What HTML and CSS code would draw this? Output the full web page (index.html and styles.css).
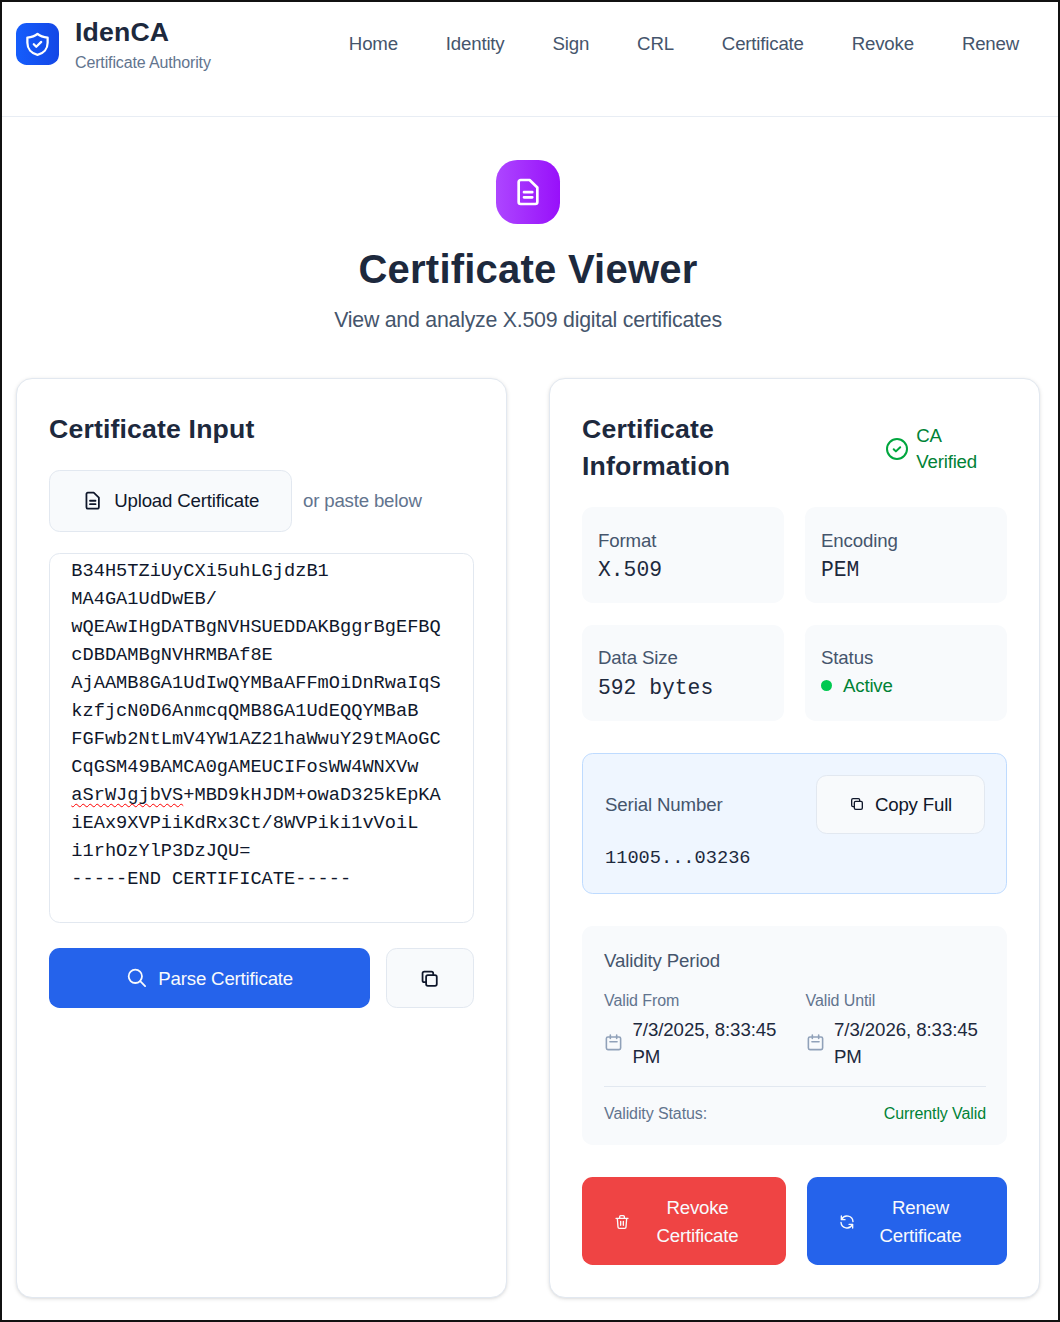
FILE: index.html
```html
<!DOCTYPE html>
<html lang="en">
<head>
<meta charset="utf-8">
<title>IdenCA - Certificate Viewer</title>
<link rel="stylesheet" href="styles.css">
</head>
<body>
<svg class="symbols" aria-hidden="true">
  <symbol id="file" viewBox="0 0 24 24"><path d="M13.2 3H6.5A1.5 1.5 0 0 0 5 4.500v15A1.500 1.500 0 0 0 6.500 21h11a1.500 1.500 0 0 0 1.500-1.500V8.600zM9 12.100h6.200M9 16h6.200"/></symbol>
  <symbol id="copy" viewBox="0 0 24 24"><rect x="8" y="8" width="12" height="12" rx="2"/><path d="M8 16H6a2 2 0 0 1-2-2V6a2 2 0 0 1 2-2h8a2 2 0 0 1 2 2v2"/></symbol>
  <symbol id="calendar" viewBox="0 0 24 24"><rect x="3" y="5" width="18" height="16" rx="2"/><path d="M8 2.500V7M16 2.500V7M7.500 11h9"/></symbol>
</svg>
<header class="topbar">
  <div class="brand">
    <span class="logo"><svg viewBox="0 0 24 24"><path d="M12 2.500C9.500 4.700 6.500 5.500 3 5.800v4.700C3 15.800 6.500 20 12 21.200c5.500-1.200 9-5.400 9-10.700V5.800c-3.500-.3-6.500-1.100-9-3.300z"/><path d="M8.700 11.800l2.200 2.200 4.400-4.300"/></svg></span>
    <div><div class="brand-name">IdenCA</div><div class="brand-sub">Certificate Authority</div></div>
  </div>
  <nav class="nav"><a>Home</a><a>Identity</a><a>Sign</a><a>CRL</a><a>Certificate</a><a>Revoke</a><a>Renew</a></nav>
</header>
<main>
  <section class="hero">
    <span class="hero-icon"><svg><use href="#file"/></svg></span>
    <h1>Certificate Viewer</h1>
    <p>View and analyze X.509 digital certificates</p>
  </section>
  <div class="columns">
    <section class="card">
      <h2>Certificate Input</h2>
      <div class="upload-row">
        <button class="btn light upload"><svg><use href="#file"/></svg><span>Upload Certificate</span></button>
        <span class="hint">or paste below</span>
      </div>
      <div class="pem" role="textbox">B34H5TZiUyCXi5uhLGjdzB1
MA4GA1UdDwEB/
wQEAwIHgDATBgNVHSUEDDAKBggrBgEFBQ
cDBDAMBgNVHRMBAf8E
AjAAMB8GA1UdIwQYMBaAFFmOiDnRwaIqS
kzfjcN0D6AnmcqQMB8GA1UdEQQYMBaB
FGFwb2NtLmV4YW1AZ21haWwuY29tMAoGC
CqGSM49BAMCA0gAMEUCIFosWW4WNXVw
<span class="misspelled">aSrWJgjbVS</span>+MBD9kHJDM+owaD325kEpKA
iEAx9XVPiiKdRx3Ct/8WVPiki1vVoiL
i1rhOzYlP3DzJQU=
-----END CERTIFICATE-----</div>
      <div class="parse-row">
        <button class="btn blue parse"><svg viewBox="0 0 24 24"><circle cx="10.500" cy="10.500" r="7.500"/><path d="M16 16l5.500 5.500"/></svg><span>Parse Certificate</span></button>
        <button class="btn light copy" aria-label="Copy"><svg><use href="#copy"/></svg></button>
      </div>
    </section>
    <section class="card">
      <div class="info-head">
        <h2>Certificate<br>Information</h2>
        <div class="verified"><svg viewBox="0 0 24 24"><circle cx="12" cy="12" r="10"/><path d="M8.700 12.200l2.200 2.200 4.300-4.200"/></svg><span>CA<br>Verified</span></div>
      </div>
      <div class="facts">
        <div class="fact"><div class="label">Format</div><div class="value">X.509</div></div>
        <div class="fact"><div class="label">Encoding</div><div class="value">PEM</div></div>
        <div class="fact"><div class="label">Data Size</div><div class="value">592 bytes</div></div>
        <div class="fact"><div class="label">Status</div><div class="active"><i></i>Active</div></div>
      </div>
      <div class="serial">
        <div class="serial-head"><span class="label">Serial Number</span>
          <button class="btn light copy-full"><svg><use href="#copy"/></svg><span>Copy Full</span></button></div>
        <div class="serial-value">11005...03236</div>
      </div>
      <div class="validity">
        <div class="label">Validity Period</div>
        <div class="dates">
          <div><div class="small">Valid From</div><div class="date"><svg><use href="#calendar"/></svg><span>7/3/2025, 8:33:45<br>PM</span></div></div>
          <div><div class="small">Valid Until</div><div class="date"><svg><use href="#calendar"/></svg><span>7/3/2026, 8:33:45<br>PM</span></div></div>
        </div>
        <div class="validity-status small"><span>Validity Status:</span><span class="ok">Currently Valid</span></div>
      </div>
      <div class="actions">
        <button class="btn red"><svg viewBox="0 0 24 24"><path d="M3 6.500h18M5 6.500l1 13a2 2 0 0 0 2 2h8a2 2 0 0 0 2-2l1-13M8.500 6V4a1.500 1.500 0 0 1 1.500-1.500h4a1.500 1.500 0 0 1 1.500 1.500v2M10 11v6M14 11v6"/></svg><span>Revoke<br>Certificate</span></button>
        <button class="btn blue"><svg viewBox="0 0 24 24"><path d="M3.500 3v5.500H9M20.500 21v-5.500H15M4 8A9 9 0 0 1 21 11.500M20 16A9 9 0 0 1 3 12.500"/></svg><span>Renew<br>Certificate</span></button>
      </div>
    </section>
  </div>
</main>
</body>
</html>
```
FILE: styles.css
```css
* { box-sizing: border-box; }
body {
  margin: 0;
  height: 1322px;
  border: 2px solid #111;
  background: #fff;
  overflow: hidden;
  color: #1d293d;
  font: 18.67px/26.67px "Liberation Sans", Arial, sans-serif;
  letter-spacing: -.19px;
  font-feature-settings: "liga" 1;
}
h1, h2, p { margin: 0; }
svg { display: block; flex: none; fill: none; stroke: currentColor; stroke-width: 2; stroke-linecap: round; stroke-linejoin: round; }
.symbols { width: 0; height: 0; position: absolute; }

.topbar { height: 115px; border-bottom: 1px solid #e8edf4; padding: 12px 39px 0 14px; display: flex; justify-content: space-between; align-items: flex-start; }
.brand { display: flex; gap: 16px; }
.logo { width: 43px; height: 42px; margin-top: 9px; border-radius: 10.67px; background: linear-gradient(90deg, #155dfc, #1447e6); color: #fff; display: grid; place-items: center; }
.logo svg { width: 27px; height: 27px; }
.brand-name { font-size: 26.67px; line-height: 37px; padding-bottom: 1px; font-weight: 700; letter-spacing: .15px; }
.brand-sub { font-size: 16px; line-height: 21.33px; color: #62748e; letter-spacing: -.14px; }
.nav { display: flex; gap: 48px; color: #45556c; padding-top: 17px; }

.hero { height: 261px; padding-top: 43px; display: flex; flex-direction: column; align-items: center; width: 1052px; }
.hero-icon { width: 64px; height: 64px; border-radius: 21.33px; background: linear-gradient(90deg, #ad46ff, #9810fa); color: #fff; display: grid; place-items: center; }
.hero-icon svg { width: 32px; height: 32px; }
h1 { margin-top: 21px; font-size: 40px; line-height: 48px; letter-spacing: .23px; }
.hero p { margin-top: 11px; font-size: 21.33px; line-height: 32px; color: #45556c; letter-spacing: -.24px; }

.columns { display: grid; grid-template-columns: 491px 491px; gap: 42px; margin-left: 14px; height: 920px; }
.card { border: 1px solid #e2e8f0; border-radius: 16px; padding: 32px; background: #fff; box-shadow: 0 1px 4px rgba(0, 0, 0, .1), 0 1px 3px -1px rgba(0, 0, 0, .1); }
h2 { font-size: 26.67px; line-height: 37.33px; letter-spacing: .15px; }
.btn { border: 0; border-radius: 10.67px; font: inherit; letter-spacing: inherit; line-height: 28px; display: flex; align-items: center; justify-content: center; padding: 0; white-space: nowrap; }
.light { background: #f8fafc; border: 1px solid #e2e8f0; color: #0f172b; }
.blue { background: #2563eb; color: #f8fafc; }
.red { background: #ef4444; color: #f8fafc; }

.upload-row { margin-top: 21.67px; display: flex; align-items: center; gap: 11px; }
.upload { width: 243px; height: 62px; gap: 11px; }
.upload svg, .copy svg, .parse svg { width: 21.33px; height: 21.33px; }
.hint { color: #62748e; }
.pem { margin-top: 21px; height: 370px; border: 1px solid #e2e8f0; border-radius: 10.67px; padding: 3px 21.3px; font: 18.67px/28px "Liberation Mono", monospace; letter-spacing: 0; color: #0f172b; white-space: pre; overflow: hidden; }
.misspelled { text-decoration: underline wavy #f00 1.33px; text-underline-offset: 3px; text-decoration-skip-ink: none; }
.parse-row { margin-top: 25px; display: flex; justify-content: space-between; }
.parse { width: 321px; height: 60px; gap: 11px; }
.parse span { padding-top: 2px; }
.copy { width: 88px; height: 60px; padding-top: 1px; }

.info-head { display: flex; justify-content: space-between; align-items: center; padding-right: 30px; }
.verified { display: flex; align-items: center; gap: 7px; color: #008236; line-height: 26px; padding-top: 1px; }
.verified svg { width: 24px; height: 24px; color: #00a63e; }
.facts { margin-top: 21px; display: grid; grid-template-columns: 202px 202px; grid-auto-rows: 96px; gap: 22px 21px; }
.fact { background: #f8fafc; border-radius: 10.67px; padding: 20.5px 16px 0; }
.fact:nth-child(-n+2) { padding-top: 21px; }
.label { color: #45556c; letter-spacing: -.13px; }
.value { font: 21.33px/33px "Liberation Mono", monospace; letter-spacing: 0; }
.active { display: flex; align-items: center; gap: 11px; color: #008236; line-height: 28px; }
.active i { width: 11px; height: 11px; border-radius: 50%; background: #00c950; }
.serial { margin-top: 32px; height: 141px; border: 1px solid #bedbff; border-radius: 10.67px; background: #eff6ff; padding: 21px 21px 21px 22px; }
.serial-head { display: flex; justify-content: space-between; align-items: center; }
.serial-head .label { padding-top: 2px; }
.copy-full span { padding-top: 1px; }
.copy-full { width: 169px; height: 59px; gap: 10px; }
.copy-full svg { width: 16px; height: 16px; }
.serial-value { margin-top: 11px; font: 18.67px/26.67px "Liberation Mono", monospace; letter-spacing: 0; }
.validity { margin-top: 32px; height: 219px; background: #f8fafc; border-radius: 10.67px; padding: 22px 21px 0 22px; }
.dates { margin-top: 16px; display: grid; grid-template-columns: 180px 180px; gap: 21.5px; }
.small { font-size: 16px; line-height: 21.33px; color: #62748e; letter-spacing: -.1px; }
.date { margin-top: 4px; display: flex; align-items: center; gap: 9.5px; white-space: nowrap; letter-spacing: -.08px; line-height: 27px; }
.date svg { width: 19px; height: 19px; color: #90a1b9; }
.validity-status { margin-top: 16px; padding-top: 16px; border-top: 1px solid #e2e8f0; display: flex; justify-content: space-between; }
.ok { color: #008236; }
.actions { margin-top: 32px; display: grid; grid-template-columns: 204px 200px; gap: 21px; }
.actions .btn { height: 88px; padding: 2px 32px 0; gap: 11px; }
.actions svg { width: 16px; height: 16px; }
.actions span { flex: 1; }
```
